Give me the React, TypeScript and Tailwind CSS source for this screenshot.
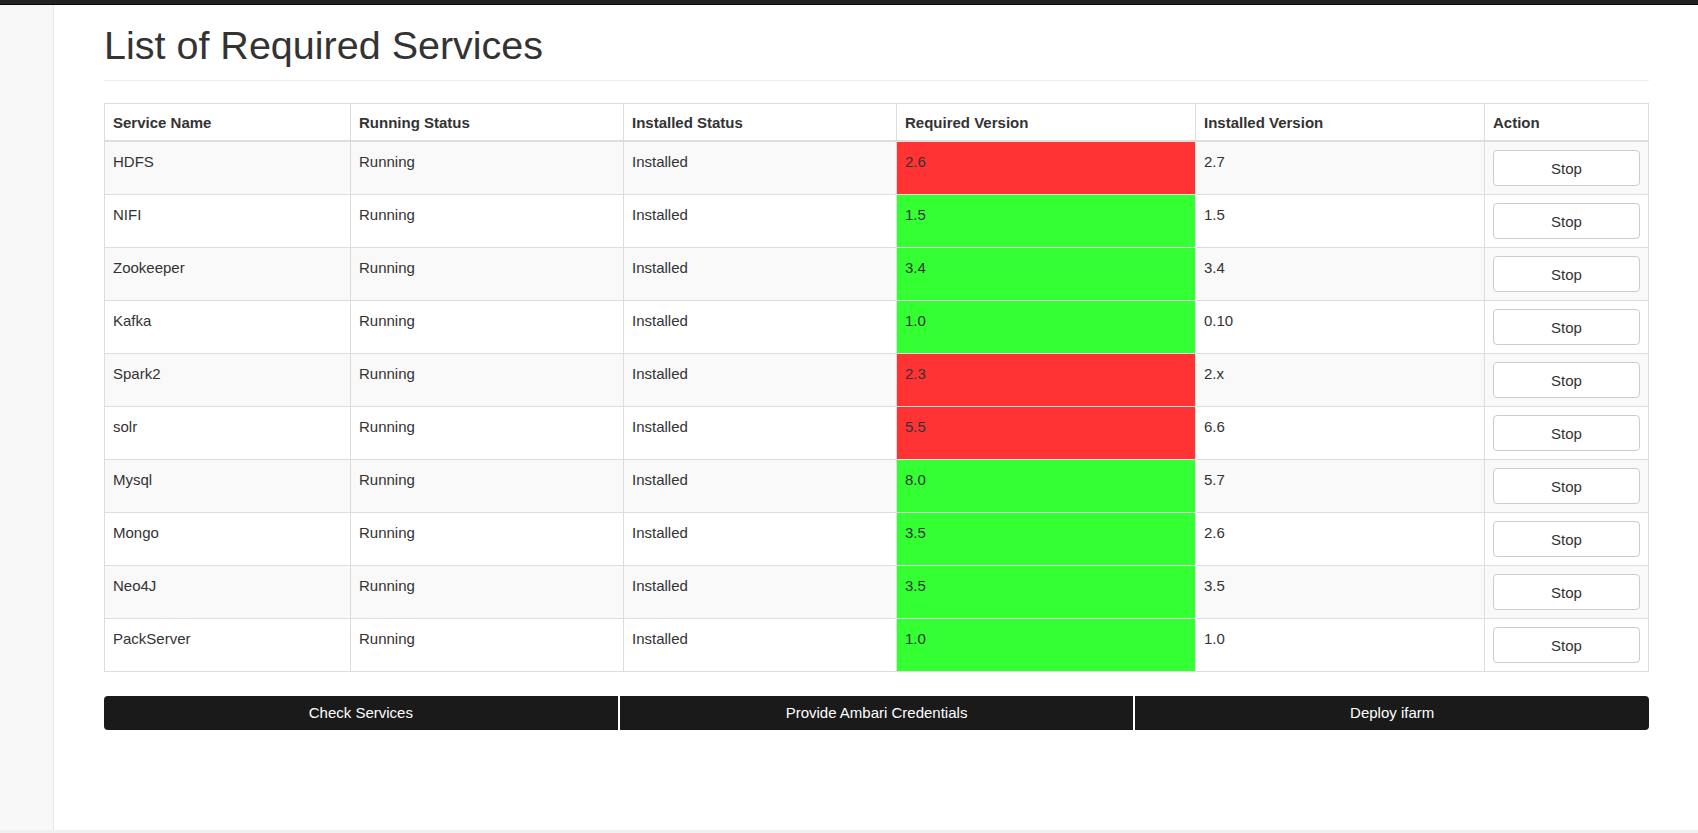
import React from "react";

type Service = {
  name: string;
  running: string;
  installed: string;
  required: string;
  version: string;
  ok: boolean;
};

const services: Service[] = [
  { name: "HDFS", running: "Running", installed: "Installed", required: "2.6", version: "2.7", ok: false },
  { name: "NIFI", running: "Running", installed: "Installed", required: "1.5", version: "1.5", ok: true },
  { name: "Zookeeper", running: "Running", installed: "Installed", required: "3.4", version: "3.4", ok: true },
  { name: "Kafka", running: "Running", installed: "Installed", required: "1.0", version: "0.10", ok: true },
  { name: "Spark2", running: "Running", installed: "Installed", required: "2.3", version: "2.x", ok: false },
  { name: "solr", running: "Running", installed: "Installed", required: "5.5", version: "6.6", ok: false },
  { name: "Mysql", running: "Running", installed: "Installed", required: "8.0", version: "5.7", ok: true },
  { name: "Mongo", running: "Running", installed: "Installed", required: "3.5", version: "2.6", ok: true },
  { name: "Neo4J", running: "Running", installed: "Installed", required: "3.5", version: "3.5", ok: true },
  { name: "PackServer", running: "Running", installed: "Installed", required: "1.0", version: "1.0", ok: true },
];

export default function App() {
  return (
    <div
      className="h-[833px] flex flex-col bg-white text-[#333] text-[15px] overflow-hidden"
      style={{ fontFamily: '"Liberation Sans", Arial, sans-serif' }}
    >
      {/* TOP BAR */}
      <div className="h-[5px] shrink-0 bg-[#222] border-b border-[#080808]"></div>

      <div className="flex flex-1 min-h-0">
        {/* SIDEBAR */}
        <div className="w-[54px] shrink-0 bg-[#f8f8f8] border-r border-[#e7e7e7]"></div>

        {/* MAIN */}
        <div className="flex-1 px-[50px]">
          <div className="mt-[18px] pb-[13px] border-b border-[#eee]">
            <h1 className="text-[39.5px] leading-[44px] font-normal text-[#333]">List of Required Services</h1>
          </div>

          <table className="mt-[22px] w-full table-fixed border-collapse border border-[#ddd]">
            <colgroup>
              <col className="w-[246px]" />
              <col className="w-[273px]" />
              <col className="w-[273px]" />
              <col className="w-[299px]" />
              <col className="w-[289px]" />
              <col className="w-[164px]" />
            </colgroup>
            <thead>
              <tr>
                {["Service Name", "Running Status", "Installed Status", "Required Version", "Installed Version", "Action"].map((h) => (
                  <th
                    key={h}
                    className="text-left font-bold px-2 pt-[9px] pb-[7px] leading-5 border border-[#ddd] border-b-2"
                  >
                    {h}
                  </th>
                ))}
              </tr>
            </thead>
            <tbody>
              {services.map((s, i) => (
                <tr key={s.name} className={i % 2 === 0 ? "bg-[#f9f9f9]" : "bg-white"}>
                  <td className="align-top px-2 pt-[10px] pb-2 leading-5 border border-[#ddd]">{s.name}</td>
                  <td className="align-top px-2 pt-[10px] pb-2 leading-5 border border-[#ddd]">{s.running}</td>
                  <td className="align-top px-2 pt-[10px] pb-2 leading-5 border border-[#ddd]">{s.installed}</td>
                  <td
                    className={`align-top px-2 pt-[10px] pb-2 leading-5 border border-[#ddd] ${
                      s.ok ? "bg-[#33ff33]" : "bg-[#ff3333]"
                    }`}
                  >
                    {s.required}
                  </td>
                  <td className="align-top px-2 pt-[10px] pb-2 leading-5 border border-[#ddd]">{s.version}</td>
                  <td className="align-top px-2 py-2 border border-[#ddd]">
                    <button className="w-full h-[36px] bg-white border border-[#ccc] rounded-[4px] text-[15px] text-[#333] pt-[2px]">
                      Stop
                    </button>
                  </td>
                </tr>
              ))}
            </tbody>
          </table>

          <div className="mt-[24px] flex gap-[2px]">
            <button className="flex-1 h-[34px] bg-[#1a1a1a] text-white text-[15px] rounded-l-[4px]">Check Services</button>
            <button className="flex-1 h-[34px] bg-[#1a1a1a] text-white text-[15px]">Provide Ambari Credentials</button>
            <button className="flex-1 h-[34px] bg-[#1a1a1a] text-white text-[15px] rounded-r-[4px]">Deploy ifarm</button>
          </div>
        </div>
      </div>

      <div className="h-[3px] shrink-0 bg-[#f0f0f0]"></div>
    </div>
  );
}
